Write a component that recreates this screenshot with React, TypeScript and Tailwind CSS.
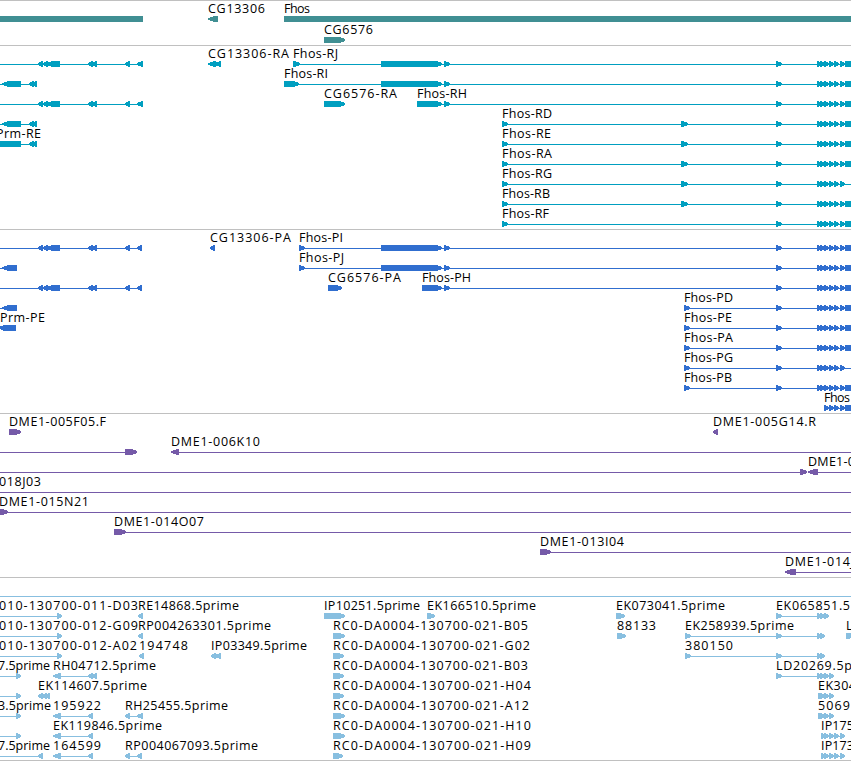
import React from "react";

type Span = [number, number];
type Label = [number, number, string]; // x, width, text

type RowData = {
  labels?: Label[];
  lines?: Span[];
  boxes?: Span[];
  fwd?: Span[];
  rev?: Span[];
};

type TrackData = {
  name: string;
  color: string;
  className: string;
  rowClassName: string;
  rows: RowData[];
};

const END = 851;

// Exons shared by the Fhos transcripts
const tailStart: Span[] = [[817, 822], [820, 825], [824, 829], [829, 834], [834, 839], [840, 845]];
const tail: Span[] = [[776, 782], ...tailStart];
const middle: Span[] = [[381, 442], [444, 450]];
const lastBox: Span[] = [[845, END]];

// Exons of the reverse strand gene on the left
const leftGene: Span[] = [[38, 43], [43, 48], [46, 60], [88, 93], [92, 97], [125, 130]];
const prmExons: Span[] = [[2, 21], [29, 34], [32, 37]];

const genes: RowData[] = [
  {
    labels: [[208, 57, "CG13306"], [284, 26, "Fhos"]],
    boxes: [[0, 143], [284, END]],
    rev: [[208, 218]],
  },
  { labels: [[324, 49, "CG6576"]], fwd: [[324, 345]] },
];

const transcripts: RowData[] = [
  {
    labels: [[208, 81, "CG13306-RA"], [293, 45, "Fhos-RJ"]],
    lines: [[0, 142], [208, 221], [293, END]],
    rev: [...leftGene, [137, 143], [208, 216], [215, 221]],
    fwd: [[293, 300], ...middle, ...tail],
    boxes: lastBox,
  },
  {
    labels: [[284, 44, "Fhos-RI"]],
    lines: [[0, 37], [284, END]],
    rev: prmExons,
    fwd: [[284, 299], ...middle, ...tail],
    boxes: lastBox,
  },
  {
    labels: [[324, 73, "CG6576-RA"], [417, 50, "Fhos-RH"]],
    lines: [[0, 142], [417, END]],
    rev: [...leftGene, [137, 143]],
    fwd: [[324, 345], [417, 442], [444, 450], ...tail],
    boxes: lastBox,
  },
  {
    labels: [[502, 50, "Fhos-RD"]],
    lines: [[0, 37], [502, END]],
    rev: prmExons,
    fwd: [[502, 508], [681, 688], ...tail],
    boxes: lastBox,
  },
  {
    labels: [[-4, 45, "Prm-RE"], [502, 49, "Fhos-RE"]],
    lines: [[0, 37], [502, END]],
    rev: [[29, 34], [32, 37]],
    fwd: [[502, 508], [681, 688], ...tail],
    boxes: [[0, 21], ...lastBox],
  },
  {
    labels: [[502, 50, "Fhos-RA"]],
    lines: [[502, END]],
    fwd: [[502, 508], [681, 688], ...tail],
    boxes: lastBox,
  },
  {
    labels: [[502, 50, "Fhos-RG"]],
    lines: [[502, END]],
    fwd: [[502, 508], [681, 688], ...tail],
  },
  {
    labels: [[502, 48, "Fhos-RB"]],
    lines: [[502, END]],
    fwd: [[502, 508], [681, 688], ...tail],
    boxes: lastBox,
  },
  {
    labels: [[502, 47, "Fhos-RF"]],
    lines: [[502, END]],
    fwd: [[502, 508], ...tail],
    boxes: lastBox,
  },
];

const proteins: RowData[] = [
  {
    labels: [[210, 81, "CG13306-PA"], [299, 44, "Fhos-PI"]],
    lines: [[0, 142], [299, END]],
    rev: [...leftGene, [137, 142], [210, 215]],
    fwd: [[299, 305], ...middle, ...tail],
    boxes: lastBox,
  },
  {
    labels: [[299, 45, "Fhos-PJ"]],
    lines: [[0, 4], [299, END]],
    rev: [[2, 17]],
    fwd: [[299, 305], ...middle, ...tail],
    boxes: lastBox,
  },
  {
    labels: [[328, 73, "CG6576-PA"], [422, 49, "Fhos-PH"]],
    lines: [[0, 142], [422, END]],
    rev: [...leftGene, [137, 142]],
    fwd: [[328, 342], [422, 442], [444, 450], ...tail],
    boxes: lastBox,
  },
  {
    labels: [[684, 49, "Fhos-PD"]],
    lines: [[0, 4], [684, END]],
    rev: [[2, 17]],
    fwd: [[684, 690], ...tail],
    boxes: lastBox,
  },
  {
    labels: [[0, 45, "Prm-PE"], [684, 48, "Fhos-PE"]],
    lines: [[684, END]],
    rev: [[-1, 16]],
    fwd: [[684, 690], ...tail],
    boxes: lastBox,
  },
  {
    labels: [[684, 49, "Fhos-PA"]],
    lines: [[684, END]],
    fwd: [[684, 690], ...tail],
    boxes: lastBox,
  },
  {
    labels: [[684, 49, "Fhos-PG"]],
    lines: [[684, END]],
    fwd: [[684, 690], ...tail],
  },
  {
    labels: [[684, 48, "Fhos-PB"]],
    lines: [[684, END]],
    fwd: [[684, 690], ...tail],
    boxes: lastBox,
  },
  {
    labels: [[824, 26, "Fhos"]],
    lines: [[824, END]],
    fwd: tailStart.slice(2),
    boxes: lastBox,
  },
];

const clones: RowData[] = [
  {
    labels: [[9, 97, "DME1-005F05.F"], [713, 103, "DME1-005G14.R"]],
    fwd: [[9, 21]],
    rev: [[713, 718]],
  },
  {
    labels: [[171, 89, "DME1-006K10"]],
    lines: [[0, 137], [171, END]],
    fwd: [[125, 137]],
    rev: [[171, 179]],
  },
  {
    labels: [[808, 47, "DME1-0"]],
    lines: [[0, 806], [808, END]],
    fwd: [[800, 807]],
    rev: [[808, 818]],
  },
  { labels: [[-1, 42, "018J03"]], lines: [[0, END]] },
  { labels: [[-1, 90, "DME1-015N21"]], lines: [[0, END]], fwd: [[-4, 8]] },
  { labels: [[114, 90, "DME1-014O07"]], lines: [[114, END]], fwd: [[114, 126]] },
  { labels: [[540, 84, "DME1-013I04"]], lines: [[540, END]], fwd: [[540, 551]] },
  { labels: [[785, 69, "DME1-014J"]], lines: [[785, END]], rev: [[785, 796]] },
];

const ests: RowData[] = [
  { lines: [[0, END]] },
  {
    labels: [
      [-1, 139, "010-130700-011-D03"],
      [138, 101, "RE14868.5prime"],
      [324, 96, "IP10251.5prime"],
      [427, 109, "EK166510.5prime"],
      [616, 109, "EK073041.5prime"],
      [776, 74, "EK065851.5"],
    ],
    lines: [[0, 62], [776, 828]],
    fwd: [[57, 62], [324, 345], [427, 435], [616, 625], [776, 782], [817, 822], [820, 825], [824, 829]],
    rev: [[138, 143]],
  },
  {
    labels: [
      [-1, 139, "010-130700-012-G09"],
      [138, 133, "RP004263301.5prime"],
      [333, 195, "RC0-DA0004-130700-021-B05"],
      [617, 39, "88133"],
      [685, 109, "EK258939.5prime"],
      [846, 7, "L"],
    ],
    lines: [[0, 62], [685, 824]],
    fwd: [[57, 62], [333, 345], [617, 626], [685, 691], [776, 782], [817, 822], [820, 825], [846, 855]],
    rev: [[138, 143]],
  },
  {
    labels: [
      [-1, 138, "010-130700-012-A02"],
      [139, 49, "194748"],
      [211, 96, "IP03349.5prime"],
      [333, 197, "RC0-DA0004-130700-021-G02"],
      [685, 48, "380150"],
    ],
    lines: [[0, 62], [685, 824]],
    fwd: [[57, 62], [333, 344], [685, 691], [776, 782], [817, 822], [820, 825]],
    rev: [[139, 144], [211, 216], [215, 221]],
  },
  {
    labels: [
      [-2, 52, "7.5prime"],
      [53, 103, "RH04712.5prime"],
      [333, 195, "RC0-DA0004-130700-021-B03"],
      [776, 76, "LD20269.5p"],
    ],
    lines: [[0, 21], [53, 97], [776, 834]],
    fwd: [[16, 21], [333, 344], [776, 782], [817, 822], [820, 825], [824, 829], [829, 834]],
    rev: [[53, 61], [88, 93], [92, 97]],
  },
  {
    labels: [
      [38, 109, "EK114607.5prime"],
      [333, 198, "RC0-DA0004-130700-021-H04"],
      [818, 38, "EK304"],
    ],
    lines: [[0, 21]],
    fwd: [[16, 21], [333, 344], [818, 823], [820, 825], [824, 829], [829, 834]],
    rev: [[38, 43], [42, 47], [45, 50]],
  },
  {
    labels: [
      [-2, 53, "3.5prime"],
      [53, 48, "195922"],
      [125, 103, "RH25455.5prime"],
      [333, 196, "RC0-DA0004-130700-021-A12"],
      [818, 32, "5069"],
    ],
    lines: [[0, 21], [53, 93], [125, 143]],
    fwd: [[16, 21], [333, 345], [818, 823], [820, 825], [824, 829], [829, 834]],
    rev: [[53, 61], [88, 93], [125, 130], [137, 143]],
  },
  {
    labels: [
      [53, 109, "EK119846.5prime"],
      [333, 198, "RC0-DA0004-130700-021-H10"],
      [821, 33, "IP175"],
    ],
    lines: [[0, 21], [53, 93], [821, 845]],
    fwd: [[16, 21], [333, 345], [821, 826], [824, 829], [829, 834], [834, 839], [840, 845]],
    rev: [[53, 61], [88, 93]],
  },
  {
    labels: [
      [-2, 52, "7.5prime"],
      [53, 48, "164599"],
      [125, 133, "RP004067093.5prime"],
      [333, 198, "RC0-DA0004-130700-021-H09"],
      [821, 33, "IP173"],
    ],
    lines: [[0, 43], [53, 93], [125, 142], [821, 845]],
    fwd: [[333, 343], [821, 826], [824, 829], [829, 834], [834, 839], [840, 845]],
    rev: [[38, 43], [53, 61], [88, 93], [125, 130], [137, 142]],
  },
];

const tracks: TrackData[] = [
  { name: "genes", color: "#408f93", className: "pb-[2px]", rowClassName: "h-[21px]", rows: genes },
  { name: "transcripts", color: "#009fc0", className: "pb-[3px]", rowClassName: "h-5", rows: transcripts },
  { name: "proteins", color: "#306ecf", className: "pb-[3px]", rowClassName: "h-5", rows: proteins },
  { name: "clones", color: "#755aa8", className: "pb-[3px]", rowClassName: "h-5", rows: clones },
  { name: "ests", color: "#88bfe0", className: "pb-[2px]", rowClassName: "h-5", rows: ests },
];

// Six pixel high exon ending in an arrow head, pointing along its strand
const exonPoints = ([start, end]: Span, reverse: boolean) => {
  const head = Math.min(6, end - start - 1);
  if (reverse) {
    return `${end},15 ${start + head},15 ${start},17 ${start},19 ${start + head},21 ${end},21`;
  }
  return `${start},15 ${end - head},15 ${end},17 ${end},19 ${end - head},21 ${start},21`;
};

const Row = ({ row, className }: { row: RowData; className: string }) => {
  return (
    <svg className={`block w-full shrink-0 overflow-visible ${className}`}>
      <g shapeRendering="crispEdges">
        {row.lines?.map(([a, b], i) => (
          <rect key={`l${i}`} x={a} y={18} width={b - a} height={1} />
        ))}
        {row.boxes?.map(([a, b], i) => (
          <rect key={`b${i}`} x={a} y={15} width={b - a} height={6} />
        ))}
        {row.fwd?.map((span, i) => (
          <polygon key={`f${i}`} points={exonPoints(span, false)} />
        ))}
        {row.rev?.map((span, i) => (
          <polygon key={`r${i}`} points={exonPoints(span, true)} />
        ))}
      </g>
      {row.labels?.map(([x, width, text]) => (
        <text key={text} x={x} y={12} textLength={width} className="fill-black text-[12.5px]">
          {text}
        </text>
      ))}
    </svg>
  );
};

const Track = ({ track }: { track: TrackData }) => {
  return (
    <section
      className={`flex flex-col border-t border-[#c0c0c0] fill-current ${track.className}`}
      style={{ color: track.color }}
    >
      {track.rows.map((row, i) => (
        <Row key={i} row={row} className={track.rowClassName} />
      ))}
    </section>
  );
};

const App = () => {
  return (
    <main className="w-[851px] h-[761px] overflow-hidden bg-white border-b border-[#c0c0c0] font-['Open_Sans',sans-serif]">
      {tracks.map((track) => (
        <Track key={track.name} track={track} />
      ))}
    </main>
  );
};

export default App;
